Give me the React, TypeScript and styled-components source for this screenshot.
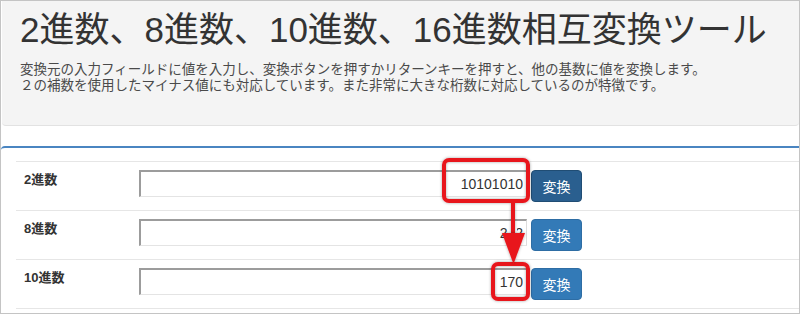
import styled, { createGlobalStyle } from "styled-components";

const GlobalStyle = createGlobalStyle`
    html, body {
        margin: 0;
        padding: 0;
        background: #fff;
    }
    body {
        font-family: "Liberation Sans", "Noto Sans CJK JP", sans-serif;
        color: #333;
    }
`;

const Frame = styled.div`
    position: relative;
    width: 800px;
    height: 314px;
    box-sizing: border-box;
    border: 1px solid #c4c4c4;
    overflow: hidden;
    background: #fff;
`;

const Jumbotron = styled.header`
    box-sizing: border-box;
    height: 125px;
    margin-left: 1px;
    padding: 9px 0 0 18px;
    background: #f4f4f4;
    border-bottom: 1px solid #e2e2e2;
    border-radius: 0 0 4px 4px;
`;

const Title = styled.h1`
    margin: 0;
    font-size: 35px;
    line-height: 40px;
    font-weight: 400;
    color: #333;
    white-space: nowrap;
`;

const Lead = styled.p`
    margin: 12px 0 0;
    font-size: 13.5px;
    line-height: 16px;
    color: #4a4a4a;
    white-space: nowrap;
`;

const Panel = styled.section`
    margin-top: 20px;
    border-top: 2px solid #4a85c1;
    border-top-left-radius: 4px;
`;

const PanelBody = styled.div`
    padding: 13px 0 0 15px;
`;

const Row = styled.div`
    display: flex;
    align-items: flex-start;
    padding: 8px 0 8px 8px;
    border-top: 1px solid #e6e6e6;
`;

const Label = styled.div`
    width: 107px;
    font-size: 13px;
    line-height: 20px;
    font-weight: 700;
    color: #333;
`;

const NumberInput = styled.input`
    box-sizing: border-box;
    width: 388px;
    height: 27px;
    margin: 0 4px 0 8px;
    padding: 0 3px 0 4px;
    border-top: 2px solid #9c9c9c;
    border-left: 2px solid #9c9c9c;
    border-right: 1px solid #dcdcdc;
    border-bottom: 1px solid #e4e4e4;
    background: #fff;
    font-family: "Liberation Sans", sans-serif;
    font-size: 14px;
    color: #333;
    text-align: right;
    outline: none;
`;

const ConvertButton = styled.button<{ $pressed?: boolean }>`
    box-sizing: border-box;
    width: 51px;
    height: 32px;
    padding: 0;
    border: 1px solid ${(p) => (p.$pressed ? "#204d74" : "#2e6da4")};
    border-radius: 4px;
    background: ${(p) => (p.$pressed ? "#2a5f8f" : "#337ab7")};
    color: #fff;
    font-family: "Noto Sans CJK JP", sans-serif;
    font-size: 14px;
    cursor: pointer;
`;

const Annotation = styled.svg`
    position: absolute;
    top: -1px;
    left: -1px;
    pointer-events: none;
`;

const rows = [
    { label: "2進数", value: "10101010", pressed: true },
    { label: "8進数", value: "252", pressed: false },
    { label: "10進数", value: "170", pressed: false },
];

export default function App() {
    return (
        <>
            <GlobalStyle />
            <Frame>
                <Jumbotron>
                    <Title>2進数、8進数、10進数、16進数相互変換ツール</Title>
                    <Lead>
                        変換元の入力フィールドに値を入力し、変換ボタンを押すかリターンキーを押すと、他の基数に値を変換します。
                        <br />
                        ２の補数を使用したマイナス値にも対応しています。また非常に大きな桁数に対応しているのが特徴です。
                    </Lead>
                </Jumbotron>

                <Panel>
                    <PanelBody>
                        {rows.map((row) => (
                            <Row key={row.label}>
                                <Label>{row.label}</Label>
                                <NumberInput defaultValue={row.value} />
                                <ConvertButton $pressed={row.pressed}>変換</ConvertButton>
                            </Row>
                        ))}
                        <Row />
                    </PanelBody>
                </Panel>

                {/* callout marks drawn over the form */}
                <Annotation width="800" height="314" viewBox="0 0 800 314">
                    <defs>
                        <filter id="glow" x="-20%" y="-20%" width="140%" height="140%">
                            <feDropShadow dx="0" dy="0" stdDeviation="1.5" floodColor="#000" floodOpacity="0.35" />
                        </filter>
                    </defs>
                    <rect x="508" y="222" width="9" height="22" fill="#fff" />
                    <g filter="url(#glow)" fill="none" stroke="#e8141c" strokeWidth="4">
                        <rect x="444" y="160" width="84" height="41" rx="5" />
                        <rect x="493" y="264" width="35" height="35" rx="5" />
                        <line x1="513" y1="203" x2="513" y2="236" />
                    </g>
                    <polygon points="502,233 525,233 513.5,264" fill="#e8141c" filter="url(#glow)" />
                </Annotation>
            </Frame>
        </>
    );
}
